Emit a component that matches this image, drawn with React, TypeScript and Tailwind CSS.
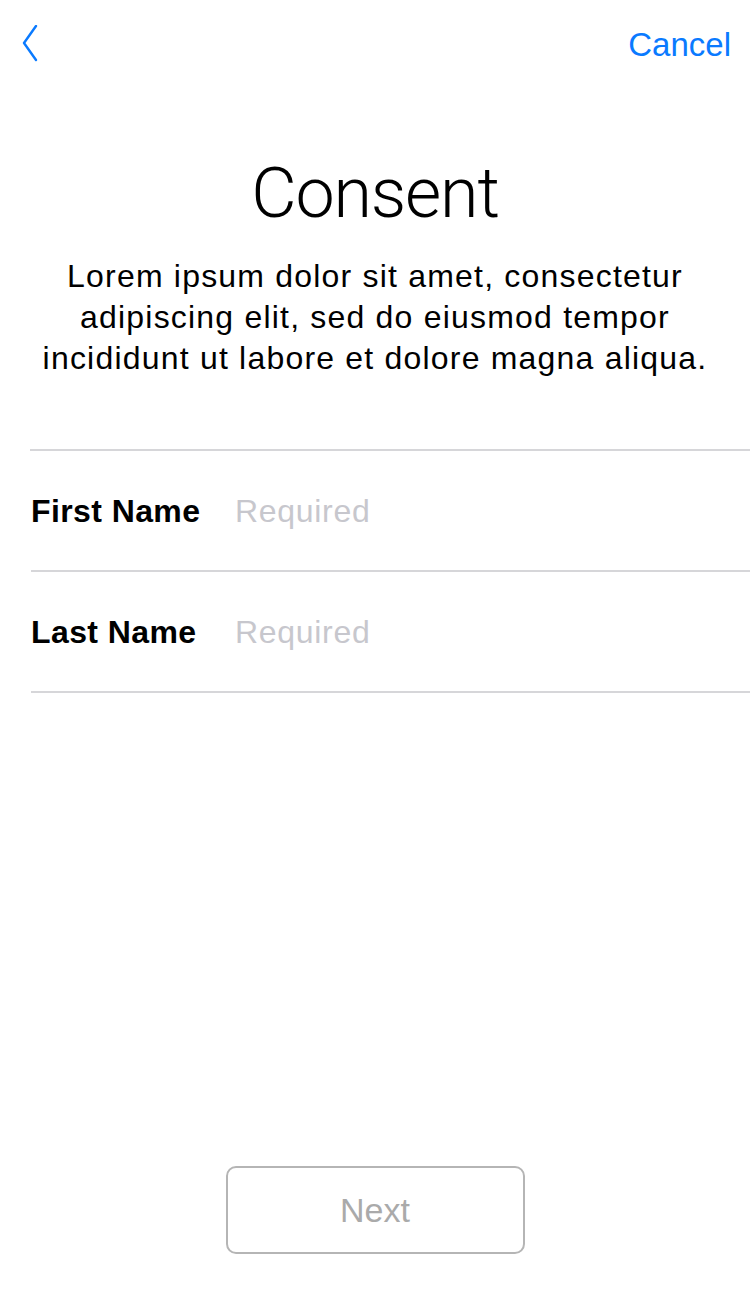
import { memo } from 'react';

const font = { fontFamily: '"Liberation Sans", Arial, sans-serif' };

const FieldRow = memo<{ label: string }>(({ label }) => (
  <div className="h-[121px] flex items-center border-b-2 border-[#d6d6d9]">
    <span className="w-[204px] text-[32px] font-bold text-black tracking-[0.4px]">{label}</span>
    <input
      className="flex-1 min-w-0 text-[32px] tracking-[0.7px] text-black placeholder:text-[#c7c7cd] outline-none bg-transparent"
      placeholder="Required"
      style={font}
    />
  </div>
));

export default function App() {
  return (
    <div className="w-[750px] h-[1294px] bg-white flex flex-col" style={font}>
      <div className="h-[88px] flex items-center justify-between pl-[22px] pr-[19px]">
        <button type="button" className="w-[16px] h-[38px] flex items-center">
          <svg width="16" height="38" viewBox="0 0 16 38" fill="none">
            <path d="M14 1 L2 18 L14 35" stroke="#0a7aff" strokeWidth="2.4" strokeLinecap="round" strokeLinejoin="round" />
          </svg>
        </button>
        <button type="button" className="text-[33px] text-[#0a7aff] leading-none">Cancel</button>
      </div>

      <h1
        className="mt-[67px] text-center text-[70px] leading-[76px] font-light text-black tracking-[-1.2px]"
        style={{ fontFamily: 'Roboto, "Liberation Sans", sans-serif' }}
      >
        Consent
      </h1>

      <p className="mt-[25px] px-[40px] text-center text-[32px] leading-[41px] tracking-[1.2px] text-black">
        Lorem ipsum dolor sit amet, consectetur adipiscing elit, sed do eiusmod tempor incididunt ut labore et dolore magna aliqua.
      </p>

      <div className="mt-[70px] ml-[30px] border-t-2 border-[#d6d6d9] pl-[1px]">
        <FieldRow label="First Name" />
        <FieldRow label="Last Name" />
      </div>

      <div className="mt-auto mb-[40px] flex justify-center">
        <button
          type="button"
          className="w-[299px] h-[88px] rounded-[10px] border-2 border-[#b5b5b5] text-[34px] text-[#aaaaaa]"
        >
          Next
        </button>
      </div>
    </div>
  );
}
